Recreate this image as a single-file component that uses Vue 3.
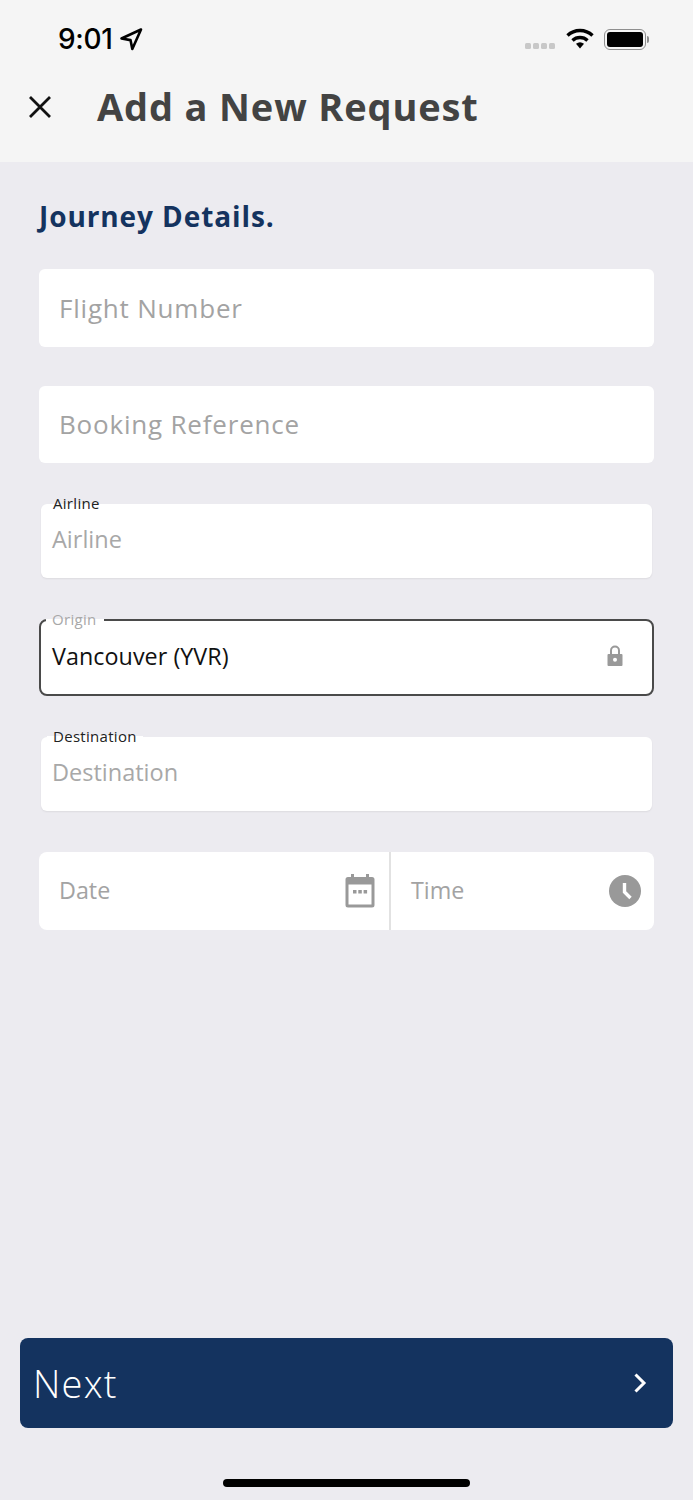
<template>
  <div class="screen">
    <header class="top">
      <div class="status">
        <div class="clock">
          <span>9:01</span>
          <svg class="arrow" width="24" height="24" viewBox="0 0 24 24">
            <path d="M22 2.500 2.500 11.500l9 1.600 1.800 8.900z" fill="none" stroke="#000" stroke-width="2.600" stroke-linejoin="round" />
          </svg>
        </div>
        <div class="status-right">
          <div class="dots"><i></i><i></i><i></i><i></i></div>
          <svg width="28" height="22" viewBox="0 0 28 22">
            <path d="M1.500 7.500a18 18 0 0 1 25 0" fill="none" stroke="#000" stroke-width="3.400" />
            <path d="M6.500 12.500a11 11 0 0 1 15 0" fill="none" stroke="#000" stroke-width="3.400" />
            <path d="M10 15.800q4-3 8 0L14 20.500z" fill="#000" />
          </svg>
          <div class="battery"><div class="cell"></div></div>
          <div class="nub"></div>
        </div>
      </div>
      <div class="title-row">
        <svg class="close" width="26" height="26" viewBox="0 0 26 26">
          <path d="M3 3l20 20M23 3 3 23" stroke="#111" stroke-width="2.800" fill="none" />
        </svg>
        <h1>Add a New Request</h1>
      </div>
    </header>

    <main class="content">
      <h2>Journey Details.</h2>

      <div class="box plain">Flight Number</div>
      <div class="box plain second">Booking Reference</div>

      <div class="float-field airline">
        <span class="legend">Airline</span>
        <span class="hint">Airline</span>
      </div>

      <div class="float-field origin">
        <span class="legend muted">Origin</span>
        <span class="value">Vancouver (YVR)</span>
        <svg class="lock" width="18" height="22" viewBox="0 0 18 22">
          <path d="M5 9V5.500a4 4 0 0 1 8 0V9" fill="none" stroke="#999" stroke-width="2" />
          <path fill-rule="evenodd" d="M2.500 9h13a1 1 0 0 1 1 1v10a1 1 0 0 1-1 1h-13a1 1 0 0 1-1-1V10a1 1 0 0 1 1-1zM9 12.800a2 2 0 1 0 0 4 2 2 0 0 0 0-4z" fill="#999" />
        </svg>
      </div>

      <div class="float-field destination">
        <span class="legend">Destination</span>
        <span class="hint">Destination</span>
      </div>

      <div class="date-row">
        <div class="cell-field date">
          <span>Date</span>
          <svg width="30" height="34" viewBox="0 0 30 34">
            <path d="M6 0h3v4H6zM21 0h3v4h-3z" fill="#999" />
            <path fill-rule="evenodd" d="M3 3h24a2.500 2.500 0 0 1 2.500 2.500v25.500a2.500 2.500 0 0 1-2.500 2.500H3A2.500 2.500 0 0 1 .500 31V5.500A2.500 2.500 0 0 1 3 3zM3.500 10.500V30.500h23V10.500z" fill="#999" />
            <path d="M8 16h3.500v3.500H8zM13.300 16h3.500v3.500h-3.500zM18.600 16h3.500v3.500h-3.500z" fill="#999" />
          </svg>
        </div>
        <div class="cell-field time">
          <span>Time</span>
          <svg width="32" height="32" viewBox="0 0 32 32">
            <circle cx="16" cy="16" r="16" fill="#999" />
            <path d="M15.500 8v9l6 6" fill="none" stroke="#fff" stroke-width="3.400" />
          </svg>
        </div>
      </div>
    </main>

    <div class="footer">
      <button class="next">
        <span>Next</span>
        <svg width="14" height="22" viewBox="0 0 14 22">
          <path d="M2.500 2.500 11 11l-8.500 8.500" fill="none" stroke="#fff" stroke-width="3" />
        </svg>
      </button>
      <div class="home"></div>
    </div>
  </div>
</template>

<script setup>
</script>

<style>
html,
body {
  margin: 0;
  background: #ecebf0;
}
</style>

<style scoped>
.screen {
  width: 693px;
  height: 1500px;
  display: flex;
  flex-direction: column;
  background: #ecebf0;
  font-family: "Open Sans", "Noto Sans", sans-serif;
  overflow: hidden;
}

.top {
  height: 162px;
  box-sizing: border-box;
  background: #f5f5f5;
}

.status {
  height: 78px;
  padding: 0 44px 0 58px;
  display: flex;
  align-items: center;
  justify-content: space-between;
}

.clock {
  display: flex;
  align-items: center;
  gap: 6px;
  font-family: Inter, Roboto, sans-serif;
  font-size: 28px;
  font-weight: 500;
  letter-spacing: -0.300px;
  color: #000;
}

.status-right {
  display: flex;
  align-items: center;
}

.dots {
  display: flex;
  gap: 2px;
  margin-top: 13px;
  margin-right: 11px;
}

.dots i {
  width: 6px;
  height: 6px;
  border-radius: 1.500px;
  background: #c8c8c8;
}

.battery {
  width: 42px;
  height: 21px;
  box-sizing: border-box;
  margin-left: 10px;
  padding: 2px;
  border: 1.500px solid #8f8f8f;
  border-radius: 6px;
}

.cell {
  height: 100%;
  background: #000;
  border-radius: 3px;
}

.nub {
  width: 2px;
  height: 7px;
  margin-left: 1px;
  background: #8f8f8f;
  border-radius: 0 2px 2px 0;
}

.title-row {
  display: flex;
  align-items: center;
  padding-left: 27px;
  height: 58px;
}

h1 {
  margin: -2px 0 0 44px;
  font-size: 38px;
  font-weight: 700;
  letter-spacing: 0.850px;
  color: #434343;
  line-height: 58px;
}

.content {
  flex: 1;
  padding: 0 39px;
}

h2 {
  margin: 35px 0 34px;
  font-size: 28px;
  line-height: 38px;
  font-weight: 700;
  letter-spacing: 0.900px;
  color: #14335f;
}

.box {
  height: 78px;
  box-sizing: border-box;
  padding-left: 20px;
  display: flex;
  align-items: center;
  background: #fff;
  border-radius: 6px;
  font-size: 26px;
  letter-spacing: 0.800px;
  color: #a3a3a3;
}

.second {
  height: 77px;
  margin-top: 39px;
  padding-bottom: 2px;
}

.float-field {
  position: relative;
  box-sizing: border-box;
  display: flex;
  align-items: center;
  background: #fff;
  border-radius: 6px;
  font-size: 23.500px;
}

.airline,
.destination {
  height: 74px;
  margin: 0 2px;
  padding: 0 0 5px 11px;
  box-shadow: 0 1px 2px rgba(0, 0, 0, 0.07);
}

.airline {
  margin-top: 41px;
}

.origin {
  height: 77px;
  margin-top: 41px;
  padding: 0 28px 4px 11px;
  justify-content: space-between;
  border: 2px solid #4a4a4a;
  border-radius: 8px;
}

.destination {
  margin-top: 41px;
}

.legend {
  position: absolute;
  left: 6px;
  top: -9px;
  padding: 0 6px;
  background: linear-gradient(transparent 50%, #fff 50%);
  font-size: 15px;
  line-height: 17px;
  letter-spacing: 0.300px;
  color: #222;
}

.origin .legend {
  left: 5px;
  top: -10px;
  padding-right: 7px;
  background: linear-gradient(#ecebf0 47%, #fff 47%);
}

.legend.muted {
  color: #a8a8a8;
}

.hint {
  color: #a8a8a8;
}

.value {
  color: #111;
  font-size: 23.300px;
  letter-spacing: 0.050px;
}

.date-row {
  height: 78px;
  margin-top: 41px;
  display: flex;
  background: #fff;
  border-radius: 8px;
}

.cell-field {
  box-sizing: border-box;
  display: flex;
  align-items: center;
  justify-content: space-between;
  font-size: 23.300px;
  color: #a3a3a3;
}

.cell-field span {
  margin-bottom: 2px;
}

.date {
  width: 352px;
  padding: 0 14px 0 20px;
  border-right: 2px solid #e2e2e2;
}

.time {
  flex: 1;
  padding: 0 13px 0 20px;
}

.footer {
  height: 162px;
  padding: 0 20px;
  display: flex;
  flex-direction: column;
  align-items: center;
}

.next {
  width: 653px;
  height: 90px;
  flex: none;
  box-sizing: border-box;
  padding: 0 26px 0 13px;
  display: flex;
  align-items: center;
  justify-content: space-between;
  border: none;
  border-radius: 8px;
  background: #14335f;
  color: #fff;
  font-family: inherit;
  font-size: 38px;
  font-weight: 300;
  letter-spacing: 1.200px;
}

.home {
  width: 247px;
  height: 8px;
  margin-top: 51px;
  border-radius: 4px;
  background: #000;
}
</style>
